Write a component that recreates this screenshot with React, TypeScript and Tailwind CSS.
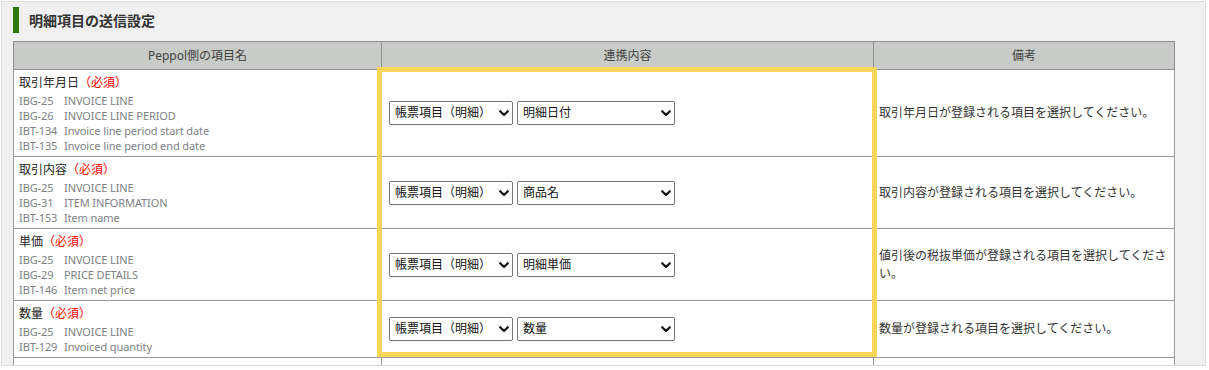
import React from "react";

type Row = {
  label: string;
  subs: [string, string][];
  first: string;
  second: string;
  note: string;
  h: string;
};

const rows: Row[] = [
  {
    label: "取引年月日",
    subs: [
      ["IBG-25", "INVOICE LINE"],
      ["IBG-26", "INVOICE LINE PERIOD"],
      ["IBT-134", "Invoice line period start date"],
      ["IBT-135", "Invoice line period end date"],
    ],
    first: "帳票項目（明細）",
    second: "明細日付",
    note: "取引年月日が登録される項目を選択してください。",
    h: "h-[87px]",
  },
  {
    label: "取引内容",
    subs: [
      ["IBG-25", "INVOICE LINE"],
      ["IBG-31", "ITEM INFORMATION"],
      ["IBT-153", "Item name"],
    ],
    first: "帳票項目（明細）",
    second: "商品名",
    note: "取引内容が登録される項目を選択してください。",
    h: "h-[72px]",
  },
  {
    label: "単価",
    subs: [
      ["IBG-25", "INVOICE LINE"],
      ["IBG-29", "PRICE DETAILS"],
      ["IBT-146", "Item net price"],
    ],
    first: "帳票項目（明細）",
    second: "明細単価",
    note: "値引後の税抜単価が登録される項目を選択してください。",
    h: "h-[72px]",
  },
  {
    label: "数量",
    subs: [
      ["IBG-25", "INVOICE LINE"],
      ["IBT-129", "Invoiced quantity"],
    ],
    first: "帳票項目（明細）",
    second: "数量",
    note: "数量が登録される項目を選択してください。",
    h: "h-[57px]",
  },
];

function Chevron() {
  return (
    <svg
      width="10"
      height="7"
      viewBox="0 0 10 7"
      className="pointer-events-none absolute right-[4px] top-[9px]"
    >
      <path d="M1.2 1.2 L5 5 L8.8 1.2" fill="none" stroke="#111" strokeWidth="2.2" strokeLinecap="round" strokeLinejoin="round" />
    </svg>
  );
}

function Sel({ value, w }: { value: string; w: string }) {
  return (
    <div className={`relative ${w} h-[24px]`}>
      <select
        defaultValue={value}
        className="h-full w-full appearance-none rounded-[2px] border border-[#767676] bg-white pl-[5px] text-[12px] text-[#111] outline-none"
      >
        <option>{value}</option>
      </select>
      <Chevron />
    </div>
  );
}

export default function App() {
  return (
    <div
      className="h-[370px] w-[1209px] overflow-hidden bg-white"
      style={{ fontFamily: '"Noto Sans", "Noto Sans CJK JP", sans-serif' }}
    >
      <div className="ml-[1px] mt-[1px] h-[365px] w-[1205px] overflow-hidden border border-[#dcdcdc] bg-[#eff0ef]">
        <div className="ml-[11px] mt-[5px] flex h-[26px] items-center">
          <div className="h-[26px] w-[6px] bg-[#2a7b00]" />
          <div className="ml-[10px] text-[14px] font-bold text-[#333]">明細項目の送信設定</div>
        </div>
        <div className="relative ml-[11px] mt-[8px] w-[1161px]">
          <table className="w-[1161px] table-fixed border-collapse text-[12px]">
            <colgroup>
              <col className="w-[368px]" />
              <col className="w-[492px]" />
              <col className="w-[301px]" />
            </colgroup>
            <thead>
              <tr className="h-[28px] bg-[#c8cbc7] text-[#444]">
                <th className="border border-[#8f8f8f] text-center font-normal">Peppol側の項目名</th>
                <th className="border border-[#8f8f8f] text-center font-normal">連携内容</th>
                <th className="border border-[#8f8f8f] text-center font-normal">備考</th>
              </tr>
            </thead>
            <tbody className="bg-white">
              {rows.map((r) => (
                <tr key={r.label} className={r.h}>
                  <td className="border border-[#9a9a9a] px-[5px] py-[3px] align-top">
                    <div className="h-[20px] leading-[20px] text-[#222]">
                      {r.label}
                      <span className="text-[#ff0000]">（必須）</span>
                    </div>
                    {r.subs.map(([c, t]) => (
                      <div key={c + t} className="flex h-[15px] text-[11px] leading-[15px] tracking-[-0.1px] text-[#7d7f86]">
                        <span className="w-[45px] shrink-0">{c}</span>
                        <span>{t}</span>
                      </div>
                    ))}
                  </td>
                  <td className="border border-[#9a9a9a] pl-[7px] align-middle">
                    <div className="flex gap-[4px]">
                      <Sel value={r.first} w="w-[124px]" />
                      <Sel value={r.second} w="w-[158px]" />
                    </div>
                  </td>
                  <td className="border border-[#9a9a9a] pl-[5px] pr-[4px] align-middle leading-[18px] text-[#333]">
                    {r.note}
                  </td>
                </tr>
              ))}
              <tr className="h-[57px]">
                <td className="border border-[#9a9a9a]" />
                <td className="border border-[#9a9a9a]" />
                <td className="border border-[#9a9a9a]" />
              </tr>
            </tbody>
          </table>
          <div className="pointer-events-none absolute left-[364px] top-[26px] h-[290px] w-[500px] border-[5px] border-[#f9d55b]" />
        </div>
      </div>
    </div>
  );
}
